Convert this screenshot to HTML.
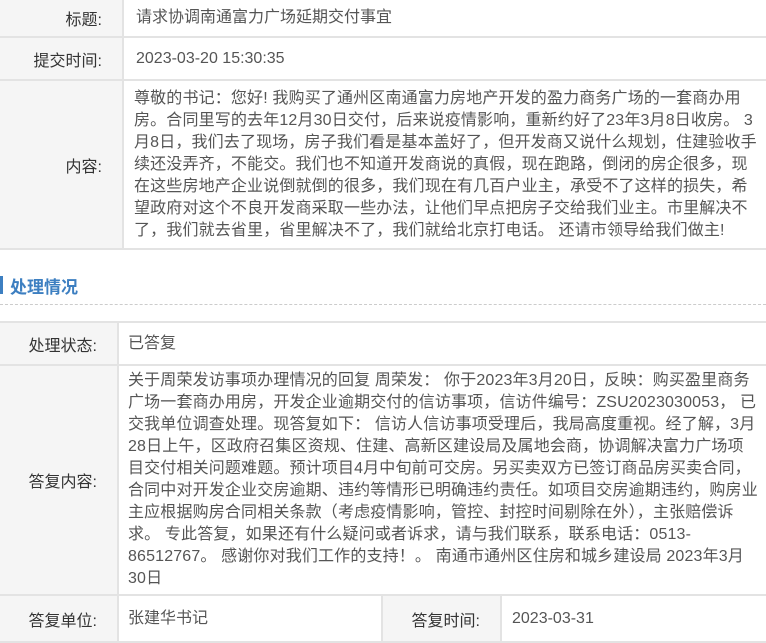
<!DOCTYPE html>
<html><head><meta charset="utf-8"><style>
*{margin:0;padding:0;box-sizing:border-box}
body{width:766px;height:643px;overflow:hidden;background:#fff;font-family:"Liberation Sans","Noto Sans CJK SC",sans-serif;font-size:16px;color:#555;position:relative}
.c{position:absolute;border-bottom:2px solid #e3e3e3}
.l{background:#f5f5f5;color:#333;text-align:right;border-right:2px solid #e3e3e3;padding-right:20px;display:flex;align-items:center;justify-content:flex-end}
.v{padding-left:12px;display:flex;align-items:center;line-height:22px}
.t{white-space:nowrap;letter-spacing:0.15px}
</style></head><body>
<div class="c l" style="left:0;top:0;width:124px;height:38px">标题:</div>
<div class="c v" style="left:124px;top:0;width:642px;height:38px">请求协调南通富力广场延期交付事宜</div>
<div class="c l" style="left:0;top:38px;width:124px;height:43px">提交时间:</div>
<div class="c v" style="left:124px;top:38px;width:642px;height:43px">2023-03-20 15:30:35</div>
<div class="c l" style="left:0;top:81px;width:124px;height:169px">内容:</div>
<div class="c v t" style="left:124px;top:81px;width:642px;height:169px;padding-left:10px">尊敬的书记：您好! 我购买了通州区南通富力房地产开发的盈力商务广场的一套商办用<br>房。合同里写的去年12月30日交付，后来说疫情影响，重新约好了23年3月8日收房。 3<br>月8日，我们去了现场，房子我们看是基本盖好了，但开发商又说什么规划，住建验收手<br>续还没弄齐，不能交。我们也不知道开发商说的真假，现在跑路，倒闭的房企很多，现<br>在这些房地产企业说倒就倒的很多，我们现在有几百户业主，承受不了这样的损失，希<br>望政府对这个不良开发商采取一些办法，让他们早点把房子交给我们业主。市里解决不<br>了，我们就去省里，省里解决不了，我们就给北京打电话。 还请市领导给我们做主!</div>
<div style="position:absolute;left:0;top:276px;width:3px;height:18px;background:#3d7fc1"></div>
<div style="position:absolute;left:10px;top:273px;font-size:17px;font-weight:bold;color:#3d7fc1">处理情况</div>
<div style="position:absolute;left:0;top:304px;width:766px;border-top:1px dashed #ccc"></div>
<div class="c l" style="left:0;top:321px;width:119px;height:45px;border-top:2px solid #e3e3e3">处理状态:</div>
<div class="c v" style="left:119px;top:321px;width:647px;height:45px;border-top:2px solid #e3e3e3;padding-left:9px">已答复</div>
<div class="c l" style="left:0;top:366px;width:119px;height:230px">答复内容:</div>
<div class="c v t" style="left:119px;top:366px;width:647px;height:230px;padding-left:9px">关于周荣发访事项办理情况的回复 周荣发：  你于2023年3月20日，反映：购买盈里商务<br>广场一套商办用房，开发企业逾期交付的信访事项，信访件编号：ZSU2023030053， 已<br>交我单位调查处理。现答复如下：  信访人信访事项受理后，我局高度重视。经了解，3月<br>28日上午，区政府召集区资规、住建、高新区建设局及属地会商，协调解决富力广场项<br>目交付相关问题难题。预计项目4月中旬前可交房。另买卖双方已签订商品房买卖合同，<br>合同中对开发企业交房逾期、违约等情形已明确违约责任。如项目交房逾期违约，购房业<br>主应根据购房合同相关条款（考虑疫情影响，管控、封控时间剔除在外），主张赔偿诉<br>求。 专此答复，如果还有什么疑问或者诉求，请与我们联系，联系电话：0513-<br>86512767。 感谢你对我们工作的支持！。 南通市通州区住房和城乡建设局 2023年3月<br>30日</div>
<div class="c l" style="left:0;top:596px;width:119px;height:47px">答复单位:</div>
<div class="c v" style="left:119px;top:596px;width:264px;height:47px;padding-left:9px;border-right:2px solid #e3e3e3">张建华书记</div>
<div class="c l" style="left:383px;top:596px;width:119px;height:47px">答复时间:</div>
<div class="c v" style="left:502px;top:596px;width:264px;height:47px;padding-left:10px">2023-03-31</div>
</body></html>
